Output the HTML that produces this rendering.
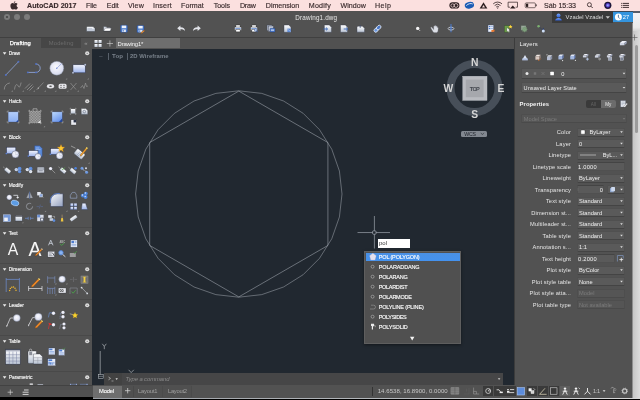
<!DOCTYPE html>
<html lang="en"><head><meta charset="utf-8"><title>AutoCAD 2017 - Drawing1.dwg</title>
<style>
html,body{margin:0;padding:0}
body{width:640px;height:400px;overflow:hidden;position:relative;background:#000;font-family:"Liberation Sans",sans-serif;-webkit-font-smoothing:antialiased}
.t{position:absolute;white-space:nowrap;line-height:1;display:block}
.b{position:absolute;box-sizing:border-box}
svg{position:absolute;left:0;top:0}
</style></head><body>
<div class="b " style="left:0px;top:11px;width:633px;height:385.7px;background:#525252;"></div>
<div class="b " style="left:0px;top:0px;width:640px;height:11px;background:#fbe0df;"></div>
<div class="b " style="left:92px;top:49px;width:423px;height:337px;background:#212830;"></div>
<div class="b " style="left:551.8px;top:11.2px;width:61.2px;height:11.6px;background:#3a3a3a;"></div>
<div class="b " style="left:613px;top:11.2px;width:19.6px;height:11.2px;background:#3494de;border-top:0.8px solid #3a4a5a"></div>
<div class="b " style="left:0px;top:37px;width:633px;height:0.6px;background:#404040;"></div>
<div class="b " style="left:0px;top:37.5px;width:92px;height:11.5px;background:#525252;"></div>
<div class="b " style="left:41px;top:38.1px;width:40.3px;height:10.2px;background:#464646;"></div>
<div class="b " style="left:92px;top:37.5px;width:423px;height:11.5px;background:#515151;"></div>
<div class="b " style="left:116px;top:37.8px;width:64.3px;height:10.7px;background:#6e6e6e;"></div>
<div class="b " style="left:0px;top:49px;width:92px;height:336px;background:#525252;"></div>
<div class="b " style="left:0px;top:385px;width:92.7px;height:11.7px;background:#505050;"></div>
<div class="b " style="left:0px;top:384.8px;width:92.7px;height:0.6px;background:#424242;"></div>
<div class="b " style="left:0px;top:95px;width:92px;height:0.7px;background:#494949;"></div>
<div class="b " style="left:0px;top:131px;width:92px;height:0.7px;background:#494949;"></div>
<div class="b " style="left:0px;top:179px;width:92px;height:0.7px;background:#494949;"></div>
<div class="b " style="left:0px;top:227px;width:92px;height:0.7px;background:#494949;"></div>
<div class="b " style="left:0px;top:263px;width:92px;height:0.7px;background:#494949;"></div>
<div class="b " style="left:0px;top:299px;width:92px;height:0.7px;background:#494949;"></div>
<div class="b " style="left:0px;top:335px;width:92px;height:0.7px;background:#494949;"></div>
<div class="b " style="left:0px;top:371px;width:92px;height:0.7px;background:#494949;"></div>
<div class="b " style="left:108.2px;top:52.5px;width:0.7px;height:7px;background:#59616b;"></div>
<div class="b " style="left:126.7px;top:52.5px;width:0.7px;height:7px;background:#59616b;"></div>
<div class="b " style="left:461px;top:130.7px;width:25.6px;height:6.1px;background:#828890;border-radius:1.5px"></div>
<div class="b " style="left:377.8px;top:239px;width:32.4px;height:8.8px;background:#ffffff;"></div>
<div class="b " style="left:364.2px;top:250.6px;width:96.4px;height:93px;background:#505050;border:0.5px solid #5e5e5e;box-shadow:0 1px 3px rgba(0,0,0,.45)"></div>
<div class="b " style="left:366.2px;top:252.7px;width:93.8px;height:8.4px;background:linear-gradient(#4a90e4,#4492ee);"></div>
<div class="b " style="left:103.7px;top:373px;width:399px;height:12.3px;background:#464647;"></div>
<div class="b " style="left:103.7px;top:373px;width:18px;height:12.3px;background:#424242;"></div>
<div class="b " style="left:92.7px;top:385.3px;width:540.3px;height:12.4px;background:#525252;"></div>
<div class="b " style="left:92.7px;top:397.8px;width:547.3px;height:0.8px;background:linear-gradient(90deg,#9a9ea4,#b8bcc0 60%,#d8d8d8);"></div>
<div class="b " style="left:92.7px;top:385.3px;width:99px;height:12.4px;background:#505050;"></div>
<div class="b " style="left:92.7px;top:385.6px;width:29.3px;height:12.1px;background:#6e6e6e;"></div>
<div class="b " style="left:133px;top:386.3px;width:0.6px;height:11px;background:#494949;"></div>
<div class="b " style="left:162.2px;top:386.3px;width:0.6px;height:11px;background:#4b4b4b;"></div>
<div class="b " style="left:191.4px;top:386.3px;width:0.6px;height:11px;background:#4b4b4b;"></div>
<div class="b " style="left:514px;top:37.6px;width:119px;height:347.6px;background:#525252;"></div>
<div class="b " style="left:514px;top:37.6px;width:0.8px;height:347.6px;background:#3c3c3c;"></div>
<div class="b " style="left:632.7px;top:11px;width:7.3px;height:386.8px;background:linear-gradient(90deg,#c6c6c6,#dcdcdc);"></div>
<div class="b " style="left:632.7px;top:13px;width:7.3px;height:18px;background:linear-gradient(#f2f2f6,#ebebeb 80%,#d4d4d4);"></div>
<div class="b " style="left:632.7px;top:11px;width:7.3px;height:2px;background:#565c6a;"></div>
<div class="b " style="left:632.4px;top:22.5px;width:0.6px;height:375.3px;background:#8e8e8e;"></div>
<div class="b " style="left:634.7px;top:45px;width:3.7px;height:87.5px;background:#9b9b9b;border-radius:1.8px"></div>
<div class="b " style="left:521px;top:68.3px;width:106px;height:10.6px;background:#5a5a5a;border:0.5px solid #505050;border-bottom:0.7px solid #444;border-radius:1.5px"></div>
<div class="b " style="left:521px;top:82.3px;width:106px;height:10.6px;background:#5a5a5a;border:0.5px solid #505050;border-bottom:0.7px solid #444;border-radius:1.5px"></div>
<div class="b " style="left:585.7px;top:100px;width:15px;height:7.8px;background:#3a3a3a;border-radius:2px 0 0 2px"></div>
<div class="b " style="left:600.7px;top:100px;width:15px;height:7.8px;background:#6c6c6c;border-radius:0 2px 2px 0"></div>
<div class="b " style="left:521px;top:113.8px;width:106px;height:9.6px;background:#555555;border:0.5px solid #4e4e4e;border-bottom:0.6px solid #4a4a4a;border-radius:1.5px"></div>
<div class="b " style="left:576.6px;top:127.5px;width:48.8px;height:9px;background:#5a5a5a;border:0.5px solid #505050;border-bottom:0.7px solid #444;border-radius:1.5px"></div>
<div class="b " style="left:576.6px;top:139.0px;width:48.8px;height:9px;background:#5a5a5a;border:0.5px solid #505050;border-bottom:0.7px solid #444;border-radius:1.5px"></div>
<div class="b " style="left:576.6px;top:150.5px;width:48.8px;height:9px;background:#5a5a5a;border:0.5px solid #505050;border-bottom:0.7px solid #444;border-radius:1.5px"></div>
<div class="b " style="left:576.6px;top:162.0px;width:48.8px;height:9px;background:#5a5a5a;border:0.5px solid #505050;border-top:0.8px solid #444;border-radius:1px"></div>
<div class="b " style="left:576.6px;top:173.5px;width:48.8px;height:9px;background:#5a5a5a;border:0.5px solid #505050;border-bottom:0.7px solid #444;border-radius:1.5px"></div>
<div class="b " style="left:576.6px;top:185.0px;width:27.1px;height:9px;background:#5a5a5a;border:0.5px solid #505050;border-top:0.8px solid #444;border-radius:1px"></div>
<div class="b " style="left:606.9px;top:185.0px;width:18.5px;height:9px;background:#5a5a5a;border:0.5px solid #505050;border-bottom:0.7px solid #444;border-radius:1.5px"></div>
<div class="b " style="left:576.6px;top:196.5px;width:48.8px;height:9px;background:#5a5a5a;border:0.5px solid #505050;border-bottom:0.7px solid #444;border-radius:1.5px"></div>
<div class="b " style="left:576.6px;top:208.0px;width:48.8px;height:9px;background:#5a5a5a;border:0.5px solid #505050;border-bottom:0.7px solid #444;border-radius:1.5px"></div>
<div class="b " style="left:576.6px;top:219.5px;width:48.8px;height:9px;background:#5a5a5a;border:0.5px solid #505050;border-bottom:0.7px solid #444;border-radius:1.5px"></div>
<div class="b " style="left:576.6px;top:231.0px;width:48.8px;height:9px;background:#5a5a5a;border:0.5px solid #505050;border-bottom:0.7px solid #444;border-radius:1.5px"></div>
<div class="b " style="left:576.6px;top:242.5px;width:48.8px;height:9px;background:#5a5a5a;border:0.5px solid #505050;border-bottom:0.7px solid #444;border-radius:1.5px"></div>
<div class="b " style="left:576.6px;top:254.0px;width:38.2px;height:9px;background:#5a5a5a;border:0.5px solid #505050;border-top:0.8px solid #444;border-radius:1px"></div>
<div class="b " style="left:576.6px;top:265.5px;width:48.8px;height:9px;background:#5a5a5a;border:0.5px solid #505050;border-bottom:0.7px solid #444;border-radius:1.5px"></div>
<div class="b " style="left:576.6px;top:277.0px;width:48.8px;height:9px;background:#5a5a5a;border:0.5px solid #505050;border-bottom:0.7px solid #444;border-radius:1.5px"></div>
<div class="b " style="left:576.6px;top:288.5px;width:48.8px;height:9px;background:#555555;border:0.5px solid #4e4e4e;border-bottom:0.6px solid #4a4a4a;border-radius:1.5px"></div>
<div class="b " style="left:576.6px;top:300.0px;width:48.8px;height:9px;background:#555555;border:0.5px solid #4e4e4e;border-bottom:0.6px solid #4a4a4a;border-radius:1.5px"></div>
<div class="b " style="left:371.6px;top:386.5px;width:0.6px;height:9px;background:#333;"></div>
<div class="b " style="left:483.0px;top:386.2px;width:10.4px;height:9.6px;background:#3a3a3a;"></div>
<div class="b " style="left:494.3px;top:386.2px;width:10.4px;height:9.6px;background:#3a3a3a;"></div>
<div class="b " style="left:505.2px;top:386.2px;width:10.4px;height:9.6px;background:#3a3a3a;"></div>
<div class="b " style="left:526.8px;top:386.2px;width:10.4px;height:9.6px;background:#3a3a3a;"></div>
<div class="b " style="left:537.8px;top:386.2px;width:10.4px;height:9.6px;background:#3a3a3a;"></div>
<div class="b " style="left:548.5999999999999px;top:386.2px;width:10.4px;height:9.6px;background:#3a3a3a;"></div>
<div class="b " style="left:559.8px;top:386.2px;width:10.4px;height:9.6px;background:#5e5e5e;"></div>
<svg width="640" height="400" viewBox="0 0 640 400">
<defs>
<linearGradient id="gb" x1="0" y1="0" x2="0" y2="1"><stop offset="0" stop-color="#e8f0fb"/><stop offset="1" stop-color="#5b8ed8"/></linearGradient>
<linearGradient id="gw" x1="0" y1="0" x2="0" y2="1"><stop offset="0" stop-color="#ffffff"/><stop offset="1" stop-color="#b9c3d3"/></linearGradient>
<radialGradient id="gs" cx="0.45" cy="0.4" r="0.7"><stop offset="0" stop-color="#fbfbff"/><stop offset=".7" stop-color="#dcdff0"/><stop offset="1" stop-color="#b8bed2"/></radialGradient>
<linearGradient id="gb2" x1="0" y1="0" x2="0" y2="1"><stop offset="0" stop-color="#f2f4fc"/><stop offset="1" stop-color="#9cb2ea"/></linearGradient>
<linearGradient id="gb3" x1="0" y1="0" x2=".6" y2="1"><stop offset="0" stop-color="#bedafc"/><stop offset="1" stop-color="#6a94ea"/></linearGradient>
<linearGradient id="gb3a" x1="0" y1="0" x2="0" y2="1"><stop offset="0" stop-color="#b4cefa"/><stop offset="1" stop-color="#8aaef2"/></linearGradient>
<pattern id="dots" width="1.6" height="1.6" patternUnits="userSpaceOnUse"><rect width="1.6" height="1.6" fill="#707070"/><rect width=".8" height=".8" fill="#b0b0b0"/><rect x=".8" y=".8" width=".8" height=".8" fill="#b0b0b0"/></pattern>
<linearGradient id="gfil" x1="0" y1="0" x2=".8" y2="1"><stop offset="0" stop-color="#f8f9fc"/><stop offset="1" stop-color="#9ca8c4"/></linearGradient>
<linearGradient id="gav" x1="0" y1="0" x2="0" y2="1"><stop offset="0" stop-color="#7aa6f8"/><stop offset="1" stop-color="#2c5cd4"/></linearGradient>
<radialGradient id="siri" cx="0.5" cy="0.5" r="0.5"><stop offset="0" stop-color="#9fd0ff"/><stop offset="0.6" stop-color="#5b3fd0"/><stop offset="1" stop-color="#1a1440"/></radialGradient>
</defs>
<g fill="#3b2c2e"><path d="M13.900 3.500c.6 0 1.100-.5 1.900-.5c.7 0 1.400.4 1.800 1c-1.500.9-1.300 2.900.3 3.500c-.4 1-1.100 2.100-1.900 2.100c-.7 0-.9-.4-1.700-.4c-.8 0-1.100.4-1.700.4c-.9 0-2.200-1.900-2.200-3.700c0-1.800 1.100-2.800 2.200-2.800c.7 0 1.100.4 1.300.4z"/><path d="M13.800 3.100c-.1-.9.700-1.700 1.500-1.800c.1.900-.7 1.700-1.500 1.800z"/></g>
<circle cx="7" cy="17" r="3" fill="#7b7b7b"/>
<circle cx="17" cy="17" r="3" fill="#7b7b7b"/>
<circle cx="27" cy="17" r="3" fill="#7b7b7b"/>
<circle cx="7" cy="17" r="1.1" fill="#444"/>
<path d="M605.600 16.200h4.400l-2.200 2.600z" fill="#c4c4c4"/>
<circle cx="618.400" cy="17" r="3.500" fill="#fff"/><path d="M618.400 14.800v2.400l1.400 1.400" stroke="#2a5a8c" stroke-width=".8" fill="none"/>
<circle cx="558.500" cy="15.600" r="2" fill="url(#gav)"/><path d="M555.200 20.600c0-3.600 6.600-3.600 6.600 0z" fill="url(#gav)"/>
<rect x="94.5" y="39.9" width="3.100" height="3.100" rx=".5" fill="url(#gw)"/>
<rect x="94.5" y="43.9" width="3.100" height="3.100" rx=".5" fill="url(#gw)"/>
<rect x="98.5" y="39.9" width="3.100" height="3.100" rx=".5" fill="url(#gw)"/>
<rect x="98.5" y="43.9" width="3.100" height="3.100" rx=".5" fill="url(#gw)"/>
<path d="M106.800 43.500h6.200M109.900 40.400v6.200" stroke="#cccccc" stroke-width=".65"/>
<path d="M2.800 52.25 h3.600 l-1.800 2.400z" fill="#ececec"/>
<circle cx="87.200" cy="53.25" r="2.100" fill="#dcdcdc"/><circle cx="87.200" cy="53.25" r=".6" fill="#666"/>
<path d="M2.800 100.25 h3.600 l-1.800 2.400z" fill="#ececec"/>
<circle cx="87.200" cy="101.25" r="2.100" fill="#dcdcdc"/><circle cx="87.200" cy="101.25" r=".6" fill="#666"/>
<path d="M2.800 136.25 h3.600 l-1.800 2.400z" fill="#ececec"/>
<circle cx="87.200" cy="137.25" r="2.100" fill="#dcdcdc"/><circle cx="87.200" cy="137.25" r=".6" fill="#666"/>
<path d="M2.800 184.25 h3.600 l-1.800 2.400z" fill="#ececec"/>
<circle cx="87.200" cy="185.25" r="2.100" fill="#dcdcdc"/><circle cx="87.200" cy="185.25" r=".6" fill="#666"/>
<path d="M2.800 232.25 h3.600 l-1.800 2.400z" fill="#ececec"/>
<circle cx="87.200" cy="233.25" r="2.100" fill="#dcdcdc"/><circle cx="87.200" cy="233.25" r=".6" fill="#666"/>
<path d="M2.800 268.25 h3.600 l-1.800 2.400z" fill="#ececec"/>
<circle cx="87.200" cy="269.25" r="2.100" fill="#dcdcdc"/><circle cx="87.200" cy="269.25" r=".6" fill="#666"/>
<path d="M2.800 304.25 h3.600 l-1.800 2.400z" fill="#ececec"/>
<circle cx="87.200" cy="305.25" r="2.100" fill="#dcdcdc"/><circle cx="87.200" cy="305.25" r=".6" fill="#666"/>
<path d="M2.800 340.25 h3.600 l-1.800 2.400z" fill="#ececec"/>
<circle cx="87.200" cy="341.25" r="2.100" fill="#dcdcdc"/><circle cx="87.200" cy="341.25" r=".6" fill="#666"/>
<path d="M2.800 376.25 h3.600 l-1.800 2.400z" fill="#ececec"/>
<circle cx="87.200" cy="377.25" r="2.100" fill="#dcdcdc"/><circle cx="87.200" cy="377.25" r=".6" fill="#666"/>
<path d="M7.600 392.200h5.400M10.300 389.500v5.400" stroke="#e4e4e4" stroke-width=".6"/>
<path d="M24 390h4.600M22.600 392.200h6M22.600 394.400h6" stroke="#e4e4e4" stroke-width=".9"/>
<polygon points="238.80,91.10 327.91,142.55 327.91,245.45 238.80,296.90 149.69,245.45 149.69,142.55" fill="none" stroke="#b2b8c0" stroke-width=".5"/>
<polygon points="238.80,90.80 261.76,93.39 283.58,101.02 303.14,113.31 319.49,129.66 331.78,149.22 339.41,171.04 342.00,194.00 339.41,216.96 331.78,238.78 319.49,258.34 303.14,274.69 283.58,286.98 261.76,294.61 238.80,297.20 215.84,294.61 194.02,286.98 174.46,274.69 158.11,258.34 145.82,238.78 138.19,216.96 135.60,194.00 138.19,171.04 145.82,149.22 158.11,129.66 174.46,113.31 194.02,101.02 215.84,93.39" fill="none" stroke="#a8aeb6" stroke-width=".5"/>
<path d="M100.200 351v23.500" stroke="#c8ccd0" stroke-width=".6"/><rect x="98.400" y="374.500" width="4.800" height="3.800" fill="none" stroke="#c8ccd0" stroke-width=".5"/><path d="M98.400 376.400h4.800" stroke="#c8ccd0" stroke-width=".4"/>
<path d="M102.300 343.800l2 2.600l2-2.600M104.300 346.400v2.800" stroke="#c8ccd0" stroke-width=".6" fill="none"/>
<path d="M128.600 369.800l2.600 2.800l2.600-2.800" stroke="#c8ccd0" stroke-width=".6" fill="none"/>
<circle cx="474.500" cy="88" r="24" fill="none" stroke="#474f59" stroke-width="8"/>
<rect x="462.800" y="76.200" width="24.200" height="24.200" fill="#b9bbc0" stroke="#c4c6ca" stroke-width=".4"/><rect x="465.800" y="79.600" width="17.800" height="17.600" fill="#a6a8ad"/>
<path d="M480.800 132.800l1.600 1.900l1.600-1.900" stroke="#2c3138" stroke-width=".6" fill="none"/>
<path d="M357.500 232.550h32.500M374.400 216v32.500" stroke="#b4bac2" stroke-width=".6"/><rect x="372.600" y="230.850" width="3.400" height="3.400" rx=".8" fill="#212830" stroke="#a8aeb8" stroke-width=".7"/>
<circle cx="372.600" cy="266.7" r="1.450" fill="#444" stroke="#b4b4b4" stroke-width=".7"/>
<circle cx="372.600" cy="276.7" r="1.450" fill="#444" stroke="#b4b4b4" stroke-width=".7"/>
<circle cx="372.600" cy="286.7" r="1.450" fill="#444" stroke="#b4b4b4" stroke-width=".7"/>
<circle cx="372.600" cy="296.7" r="1.450" fill="#444" stroke="#b4b4b4" stroke-width=".7"/>
<circle cx="372.600" cy="316.7" r="1.450" fill="#444" stroke="#b4b4b4" stroke-width=".7"/>
<path d="M372.900 253.200l3.300 2.500l-1.200 4.300h-4.200l-1.200-4.300z" fill="#e4e0ee" stroke="#b8b4cc" stroke-width=".3"/>
<path d="M371 305.200h2.600a1.900 1.900 0 0 1 0 3.800h-3.600" fill="none" stroke="#9a9a9a" stroke-width=".6"/>
<path d="M371 323.800h3v2.400h-1v3.400h-1.200v-3.600h-.8z" fill="#ececec"/><path d="M374 325l1.200.6v1.600" stroke="#ddd" stroke-width=".5" fill="none"/>
<path d="M410 336.700h4.400l-2.200 3.900z" fill="#f4f4f4"/>
<path d="M108.500 377l2 1.400l-2 1.400" stroke="#ddd" stroke-width=".6" fill="none"/><path d="M111.500 381h2" stroke="#ddd" stroke-width=".5"/><path d="M115.500 378.300h2.400l-1.200 1.600z" fill="#ddd"/>
<path d="M497.800 378.300h2.600l-1.300 1.700z" fill="#ccc"/>
<path d="M125 390.700h5.400M127.700 388v5.400" stroke="#e0e0e0" stroke-width=".7"/>
<path d="M631.5 37.5h6M634.5 34.5v6" stroke="#555" stroke-width=".6"/>
<circle cx="527" cy="73.500" r="1.500" fill="#e8e8e8"/><rect x="533.800" y="72.200" width="2.400" height="2.600" fill="#777"/><path d="M541.500 72l3 3M544.500 72l-3 3" stroke="#777" stroke-width=".7"/><rect x="550.300" y="71.700" width="3.600" height="3.600" rx=".6" fill="#fff"/>
<path d="M622.7 72.7 h2.600l-1.300 1.700z" fill="#e0e0e0"/>
<path d="M622.7 86.9 h2.600l-1.300 1.700z" fill="#e0e0e0"/>
<path d="M622.700 118h2.600l-1.300 1.700z" fill="#777"/>
<path d="M620.2 131.2 h2.600l-1.300 1.700z" fill="#e0e0e0"/>
<rect x="580.800" y="130.0" width="4.200" height="4.200" rx=".8" fill="#fff" stroke="#2a2a2a" stroke-width=".4"/>
<path d="M620.2 142.7 h2.600l-1.300 1.700z" fill="#e0e0e0"/>
<path d="M620.2 154.2 h2.600l-1.300 1.700z" fill="#e0e0e0"/>
<path d="M580 155.0 h16" stroke="#ddd" stroke-width=".6"/>
<path d="M620.2 177.2 h2.600l-1.300 1.700z" fill="#e0e0e0"/>
<path d="M578 188.0 v3" stroke="#888" stroke-width=".5" stroke-dasharray=".5 .5"/>
<rect x="610" y="188.0" width="3.800" height="4.200" rx=".5" fill="#8ca4cc"/><rect x="611.200" y="187.0" width="3.800" height="4.200" rx=".5" fill="#cdd9ee"/>
<path d="M620.2 188.7 h2.600l-1.300 1.700z" fill="#e0e0e0"/>
<path d="M620.2 200.2 h2.600l-1.300 1.700z" fill="#e0e0e0"/>
<path d="M620.2 211.7 h2.600l-1.300 1.700z" fill="#e0e0e0"/>
<path d="M620.2 223.2 h2.600l-1.300 1.700z" fill="#e0e0e0"/>
<path d="M620.2 234.7 h2.600l-1.300 1.700z" fill="#e0e0e0"/>
<path d="M620.2 246.2 h2.600l-1.300 1.700z" fill="#e0e0e0"/>
<path d="M617.400 261.5 v-6h5.800v3" fill="none" stroke="#7688a8" stroke-width=".9"/><path d="M619.400 259.6 h3.800M621.300 257.7 v3.800" stroke="#f4f4f4" stroke-width=".8"/>
<path d="M620.2 269.2 h2.600l-1.300 1.700z" fill="#e0e0e0"/>
<path d="M620.2 280.7 h2.600l-1.300 1.700z" fill="#e0e0e0"/>
<g transform="translate(86.5 26.5)"><path d="M0 1.200q0-1.200 1.200-1.200h5.300l2 2v2.400q0 .6-.6.600h-7.300q-.6 0-.6-.6z" fill="url(#gw)" stroke="#30343c" stroke-width=".4"/><path d="M1 2h4.500M1 3.300h6.500" stroke="#a4acc0" stroke-width=".5"/></g>
<g transform="translate(103.5 26)"><path d="M0 .6h2.600l.7.800h3.600v3.600h-6.900z" fill="#d8dce6" stroke="#30343c" stroke-width=".4"/><path d="M.3 5l1.400-2.800h6.200l-1.300 2.800z" fill="#ffffff" stroke="#30343c" stroke-width=".3"/></g>
<g transform="translate(120.5 25.2)"><rect x="0" y="0" width="7" height="7" rx=".8" fill="#4878c8" stroke="#2a4a8c" stroke-width=".4"/><rect x="1.300" y=".4" width="4.400" height="2.600" fill="#eef2fa"/><rect x="1.600" y="4.300" width="3.800" height="2.500" fill="#dfe6f4"/><rect x="2.200" y="4.800" width="1" height="1.600" fill="#4878c8"/></g>
<g transform="translate(137 25.5)"><rect x="0" y="0" width="7" height="7" rx=".8" fill="#4878c8" stroke="#2a4a8c" stroke-width=".4"/><rect x="1.300" y=".4" width="4.400" height="2.600" fill="#eef2fa"/><rect x="1.600" y="4.300" width="3.800" height="2.500" fill="#dfe6f4"/><rect x="2.200" y="4.800" width="1" height="1.600" fill="#4878c8"/></g>
<g transform="translate(137 25.5)"><path d="M4.200 6.800l2.800-2.200l.8 1l-2.800 2.200l-1.200.3z" fill="#f09030" stroke="#5a3a10" stroke-width=".3"/></g>
<path d="M177.200 28.300l3.200-2.700v1.700c3.200 0 4.600 1.300 4.600 3.900c-.8-1.500-2-2-4.600-2v1.800z" fill="#e2e4ea"/>
<path d="M200.800 28.300l-3.200-2.700v1.700c-3.200 0-4.600 1.300-4.600 3.900c.8-1.500 2-2 4.600-2v1.800z" fill="#e2e4ea"/>
<g transform="translate(234.5 25)"><rect x="1.400" y="0" width="4.200" height="2.400" fill="#fff" stroke="#222" stroke-width=".4"/><rect x="0" y="2" width="7" height="3.400" rx=".7" fill="#e4e8f0" stroke="#222" stroke-width=".4"/><rect x=".8" y="3" width="5.400" height="1" fill="#7f9fd8"/><rect x="1.400" y="4.600" width="4.200" height="2.300" fill="#fff" stroke="#222" stroke-width=".4"/></g>
<g transform="translate(250.5 25)"><rect x="1.400" y="0" width="4.200" height="2.400" fill="#fff" stroke="#222" stroke-width=".4"/><rect x="0" y="2" width="7" height="3.400" rx=".7" fill="#e4e8f0" stroke="#222" stroke-width=".4"/><rect x=".8" y="3" width="5.400" height="1" fill="#7f9fd8"/><rect x="1.400" y="4.600" width="4.200" height="2.300" fill="#fff" stroke="#222" stroke-width=".4"/></g>
<g transform="translate(250.5 25)"><circle cx="5.300" cy="5" r="1.400" fill="#bcd0f0" stroke="#3a5a9c" stroke-width=".5"/><path d="M6.300 6l1.200 1.200" stroke="#3a5a9c" stroke-width=".7"/></g>
<g transform="translate(267 25)"><rect x="0" y="0" width="5" height="5.600" fill="#aab2c4" stroke="#3a4050" stroke-width=".4"/><rect x="1.400" y="1" width="5" height="5.600" fill="#c4cad8" stroke="#3a4050" stroke-width=".4"/><rect x="3" y="3.300" width="5" height="3.700" rx=".6" fill="#4c7cd0" stroke="#223a70" stroke-width=".4"/><rect x="3.900" y="4.600" width="3.200" height="1" fill="#e8eefa"/></g>
<g transform="translate(284 25)"><path d="M0 0h4.800l2.200 2.200v5.100h-7z" fill="url(#gw)" stroke="#3a4050" stroke-width=".4"/><rect x="3.400" y="3.600" width="3.400" height="3.500" fill="#5a88d4"/><path d="M4 4.300l2 2" stroke="#dfe8f8" stroke-width=".6"/></g>
<g transform="translate(324.4 25)"><path d="M0 0h4.800l2.200 2.200v5.100h-7z" fill="url(#gw)" stroke="#3a4050" stroke-width=".4"/><path d="M-1 4h3.800M1.600 2.600l1.600 1.400l-1.600 1.400" stroke="#3a68b8" stroke-width=".9" fill="none"/></g>
<g transform="translate(340.5 25)"><path d="M0 0h4.800l2.200 2.200v5.100h-7z" fill="url(#gw)" stroke="#3a4050" stroke-width=".4"/><path d="M3.200 4h3.800M5.600 2.600l1.600 1.400l-1.600 1.400" stroke="#3a68b8" stroke-width=".9" fill="none"/></g>
<g transform="translate(357 26.2)"><path d="M0 1.200q0-1.200 1.200-1.200h4.300l2 2v4h-7.500z" fill="url(#gw)" stroke="#3a4050" stroke-width=".4"/><path d="M3.200 -1.200v3" stroke="#3a4a70" stroke-width=".7"/></g>
<g transform="translate(377.5 28.7)"><g transform="rotate(-45)"><rect x="-4.200" y="-1.700" width="5" height="3.400" rx="1.700" fill="#6a98e0" stroke="#e8eefa" stroke-width=".8"/><rect x="-.8" y="-1.700" width="5" height="3.400" rx="1.700" fill="#4a78c8" stroke="#e8eefa" stroke-width=".8"/></g></g>
<circle cx="417.700" cy="28.400" r="1.700" fill="#f4f4f6"/><path d="M418.900 29.700l1.300 1.300" stroke="#d0d0d4" stroke-width=".8"/>
<path d="M432.600 28.200l-.9-.9c-.6-.5-1.200.2-.8.800l2 3.500c.5.800 1 1 2 1h1.300c1 0 1.600-.6 1.700-1.500l.3-3.200c0-.7-.9-.8-1 0v-1.300c0-.8-1-.8-1.100 0v-.6c0-.8-1.100-.8-1.100 0v.4c0-.8-1.200-.8-1.200 0v3.400z" fill="#dcdfe6" stroke="#8c909c" stroke-width=".3"/>
<path d="M451 24v8.200" stroke="#4a78c8" stroke-width="1.100"/><ellipse cx="451" cy="28.600" rx="2.900" ry="1.400" fill="none" stroke="#dfe6f6" stroke-width=".7"/><path d="M451 26.800v3" stroke="#4a78c8" stroke-width="1.100"/>
<g transform="translate(488 25)"><rect x="0" y="0" width="5.600" height="7" fill="#eef2fa" stroke="#3a4a70" stroke-width=".4"/><rect x=".8" y="1" width="1.600" height="1.200" fill="#4a78c8"/><rect x=".8" y="3" width="1.600" height="1.200" fill="#4a78c8"/><path d="M3 1.600h2M3 3.600h2" stroke="#4a78c8" stroke-width=".5"/><path d="M3 5.600l3.200-1l.6 1.600l-3 1z" fill="#e8752a"/></g>
<g transform="translate(504.5 25.3)"><rect x="0" y=".5" width="4.600" height="6.300" fill="#6a9c48" stroke="#3a5a28" stroke-width=".4"/><path d="M2.400 2.200v4.400l1.100-1l.9 1.600l.8-.4l-.9-1.600h1.400z" fill="#fff" stroke="#333" stroke-width=".25"/><path d="M6 -.6l.6 1.300l1.400.2l-1 .9l.3 1.400l-1.300-.7l-1.200.7l.2-1.400l-1-.9l1.400-.2z" fill="#ffd83a"/></g>
<g transform="translate(521 25.6)"><rect x="0" y="0" width="5" height="4.600" fill="#9aa89c" stroke="#566458" stroke-width=".4"/><circle cx="3.600" cy="3.800" r="2.400" fill="#7a9c78"/><circle cx="3.600" cy="3.800" r="1" fill="#a8c0a6"/><path d="M3.600 .9v5.800M.7 3.800h5.800M1.600 1.800l4 4M5.600 1.800l-4 4" stroke="#7a9c78" stroke-width=".7"/></g>
<circle cx="538.600" cy="26.300" r="1.300" fill="#7cb070"/><path d="M539.500 27l3.600 3.600" stroke="#2a3a60" stroke-width=".6"/><path d="M543.300 27.500l-1.500 3.500h3z" fill="#2a3a68"/><circle cx="543.300" cy="31" r="1.500" fill="#cfe0f8"/>
<path d="M5.800 75l12.600-13.200" stroke="#8fa4d6" stroke-width=".8"/><circle cx="5.800" cy="75" r="1" fill="#4f6fc4"/><circle cx="18.400" cy="61.800" r="1" fill="#4f6fc4"/>
<path d="M27.500 72.400h8.500a4.200 4.200 0 0 0 0-8.400" fill="none" stroke="#8fa4d6" stroke-width=".9"/><circle cx="27.800" cy="72.400" r=".9" fill="#4f6fc4"/><circle cx="36" cy="72.400" r=".9" fill="#4f6fc4"/><circle cx="36" cy="64" r=".9" fill="#4f6fc4"/>
<circle cx="56.800" cy="68.300" r="7" fill="url(#gs)" stroke="#70788c" stroke-width=".4"/><path d="M56.800 68.300l4.600-4.600" stroke="#7c90d8" stroke-width=".6"/><circle cx="56.800" cy="68.300" r=".7" fill="#6c84d4"/>
<rect x="73" y="64.800" width="12.200" height="8" fill="url(#gb2)" stroke="#2c3450" stroke-width=".45"/><circle cx="73" cy="72.800" r="1" fill="#d8e0f0" stroke="#2c3450" stroke-width=".3"/><circle cx="85.200" cy="64.800" r="1" fill="#d8e0f0" stroke="#2c3450" stroke-width=".3"/>
<path d="M65.60000000000001 79.6 l1.600 0 l0 -1.600z" fill="#8a8a8a"/>
<path d="M87.2 79.6 l1.600 0 l0 -1.600z" fill="#8a8a8a"/>
<path d="M4.300 89.500c0-3.500 2-6 5.500-6.500" fill="none" stroke="#9c9c9c" stroke-width=".7"/>
<path d="M14.500 89.500c1-7 3-5 4-3s2-1 2.600-4" fill="none" stroke="#9c9c9c" stroke-width=".7"/>
<path d="M25 88.500l5-5M27 90l5.500-5.500M29.500 90.500l4-4" fill="none" stroke="#9c9c9c" stroke-width=".7"/>
<path d="M36.500 90l7-7.500" fill="none" stroke="#9c9c9c" stroke-width=".6"/><circle cx="38.300" cy="88.100" r=".7" fill="#ccc"/>
<ellipse cx="50.500" cy="86.200" rx="3.600" ry="2.200" fill="#e4e4e8"/><ellipse cx="50.500" cy="86.200" rx="1.400" ry=".8" fill="#555"/>
<rect x="58.600" y="83.800" width="8" height="5" rx="1.600" fill="#e6e6ea"/><circle cx="61" cy="85.300" r=".6" fill="#444"/><circle cx="64" cy="85.300" r=".6" fill="#444"/><circle cx="61" cy="87.300" r=".6" fill="#444"/><circle cx="64" cy="87.300" r=".6" fill="#444"/>
<path d="M70.500 83l5.500 6.500M76.500 83l-6 7" fill="none" stroke="#9c9c9c" stroke-width=".6"/>
<path d="M80.500 88l2-2.500l1.500 3l1.500-5.500l1 3.500l1.500-.5" fill="none" stroke="#9c9c9c" stroke-width=".6"/>
<path d="M11.2 91.8 l1.600 0 l0 -1.600z" fill="#8a8a8a"/>
<path d="M22.2 91.8 l1.600 0 l0 -1.600z" fill="#8a8a8a"/>
<path d="M33.2 91.8 l1.600 0 l0 -1.600z" fill="#8a8a8a"/>
<path d="M44.2 91.8 l1.600 0 l0 -1.600z" fill="#8a8a8a"/>
<path d="M54.7 91.8 l1.600 0 l0 -1.600z" fill="#8a8a8a"/>
<path d="M66.7 91.8 l1.600 0 l0 -1.600z" fill="#8a8a8a"/>
<path d="M77.2 91.8 l1.600 0 l0 -1.600z" fill="#8a8a8a"/>
<rect x="8.1" y="111.9" width="10.1" height="10.099999999999994" fill="url(#gb3a)" stroke="#3a4a78" stroke-width=".3"/>
<path d="M18.2 122 l-2.2 0 l2.2 -2.2z" fill="#24469a"/>
<path d="M8.1 111.9h-1.5M8.1 111.9v-1.5M18.2 111.9h1.5M18.2 111.9v-1.5M8.1 122h-1.5M8.1 122v1.5M18.2 122h1.5M18.2 122v1.5" stroke="#c8c8c8" stroke-width=".5" fill="none"/>
<rect x="52" y="111.9" width="10.200000000000003" height="10.099999999999994" fill="url(#gb3)" stroke="#3a4a78" stroke-width=".3"/>
<path d="M62.2 122 l-3.4 0 l3.4 -3.4z" fill="#24469a"/>
<path d="M52 111.9h-1.5M52 111.9v-1.5M62.2 111.9h1.5M62.2 111.9v-1.5M52 122h-1.5M52 122v1.5M62.2 122h1.5M62.2 122v1.5" stroke="#c8c8c8" stroke-width=".5" fill="none"/>
<rect x="29.400" y="111" width="11.200" height="12" fill="url(#dots)" stroke="#b8b8b8" stroke-width=".5" stroke-dasharray="1 .8"/>
<path d="M33 111v-2.200h4v2.200" fill="none" stroke="#c8c8c8" stroke-width=".6"/><path d="M40.600 123l-3 0l3-3z" fill="#e0e0e0"/>
<path d="M29.4 111h-1.2M29.4 111v-1.2M40.6 111h1.2M40.6 111v-1.2M29.4 123h-1.2M29.4 123v1.2M40.6 123h1.2M40.6 123v1.2" stroke="#c8c8c8" stroke-width=".5" fill="none"/>
<path d="M43.5 127.3 l1.600 0 l0 -1.600z" fill="#8a8a8a"/>
<rect x="70.600" y="108.800" width="5" height="5" fill="url(#gw)" stroke="#333" stroke-width=".3"/>
<path d="M70.6 108.8h-1M70.6 108.8v-1M75.6 108.8h1M75.6 108.8v-1M70.6 113.8h-1M70.6 113.8v1M75.6 113.8h1M75.6 113.8v1" stroke="#bbb" stroke-width=".5" fill="none"/>
<path d="M81.200 108.600h4.600l2 1.800v4h-6.600z" fill="url(#gw)" stroke="#30343c" stroke-width=".4"/><circle cx="84.300" cy="111.600" r="1.300" fill="none" stroke="#70788c" stroke-width=".7"/>
<rect x="71" y="119.800" width="5.200" height="5.200" fill="#e8eaf0" stroke="#333" stroke-width=".3"/><path d="M73.600 119.800h2.600v2.600h-2.600z" fill="#2c3448"/>
<rect x="6.6" y="147.2" width="9.200000000000001" height="6.600000000000023" fill="url(#gb2)" stroke="#2c3450" stroke-width=".5"/>
<circle cx="6.3" cy="153.60000000000002" r=".8" fill="#5a82d8"/>
<circle cx="15.4" cy="154.4" r="3.6" fill="url(#gs)" stroke="#3a4050" stroke-width=".4"/>
<path d="M15.4 151.52v2.8800000000000003h2.8800000000000003" stroke="#9aa2b4" stroke-width=".3" fill="none"/>
<path d="M34.600 145.800h5l2.600 2.600v8h-7.600z" fill="#5c8cdc" stroke="#2a4688" stroke-width=".4"/><path d="M36 148h3M36 149.600h4.600" stroke="#bcd0f4" stroke-width=".5"/>
<rect x="28.6" y="150.6" width="9.399999999999999" height="5.700000000000017" fill="url(#gb2)" stroke="#2c3450" stroke-width=".5"/>
<circle cx="28.3" cy="156.10000000000002" r=".8" fill="#5a82d8"/>
<circle cx="38" cy="156.6" r="3.1" fill="url(#gs)" stroke="#3a4050" stroke-width=".4"/>
<path d="M38 154.12v2.4800000000000004h2.4800000000000004" stroke="#9aa2b4" stroke-width=".3" fill="none"/>
<rect x="50.6" y="148.6" width="9.399999999999999" height="5.900000000000006" fill="url(#gb2)" stroke="#2c3450" stroke-width=".5"/>
<circle cx="50.300000000000004" cy="154.3" r=".8" fill="#5a82d8"/>
<circle cx="59.6" cy="155.7" r="3.4" fill="url(#gs)" stroke="#3a4050" stroke-width=".4"/>
<path d="M59.6 152.98v2.72h2.72" stroke="#9aa2b4" stroke-width=".3" fill="none"/>
<path d="M61 144.600l1 2.400l2.600.2l-2 1.700l.7 2.600l-2.300-1.400l-2.300 1.400l.7-2.600l-2-1.700l2.600-.2z" fill="#ffc830" stroke="#e08a10" stroke-width=".3"/>
<path d="M71 146l4.500 2.200" stroke="#ddd" stroke-width=".5"/><g transform="translate(79.500 154) rotate(40)"><rect x="-5" y="-3.200" width="10" height="6.400" rx="1" fill="url(#gw)" stroke="#3a4050" stroke-width=".4"/><path d="M-2 -1.400h5M-2 .2h5M-2 1.800h3" stroke="#8090b8" stroke-width=".5"/></g><path d="M80.500 154.600l5.200-6.400l1.300 1l-5.200 6.400l-1.700.6z" fill="#f0a030" stroke="#6a4010" stroke-width=".3"/><path d="M85.700 148.200l.9-1.100l1.300 1l-.9 1.100z" fill="#ffe060"/>
<path d="M88.0 163.8 l1.600 0 l0 -1.600z" fill="#8a8a8a"/>
<g transform="translate(7.6 170.6) rotate(40)"><path d="M-6 0h2.500" stroke="#ccc" stroke-width=".4"/><rect x="-3.200" y="-1.800" width="6.400" height="3.600" rx=".7" fill="url(#gw)" stroke="#3a4050" stroke-width=".3"/></g>
<circle cx="16.3" cy="169.6" r="1.700" fill="#c8d4ea"/><circle cx="19.6" cy="168.7" r="1.900" fill="#5c8cdc"/><circle cx="19.6" cy="171.6" r="1.700" fill="#5c8cdc"/>
<path d="M16.3 169.6L19.6 168.7M16.3 169.6L19.6 171.6" stroke="#a8b8d8" stroke-width=".5"/>
<circle cx="27.3" cy="169.6" r="1.700" fill="#e4e8f0"/><circle cx="30.6" cy="168.7" r="1.900" fill="#5c8cdc"/><circle cx="30.6" cy="171.6" r="1.700" fill="#e4e8f0"/>
<path d="M27.3 169.6L30.6 168.7M27.3 169.6L30.6 171.6" stroke="#a8b8d8" stroke-width=".5"/>
<rect x="37.200" y="167.200" width="7" height="5.600" rx=".6" fill="#d8dce6" stroke="#3a4050" stroke-width=".3"/><path d="M37.200 169h7M38.600 170.800h4.200" stroke="#4a5060" stroke-width=".6"/>
<path d="M51 169l4.200 4.200" stroke="#c8c8c8" stroke-width=".5"/><circle cx="50.600" cy="168.600" r="1.700" fill="url(#gs)"/>
<g transform="translate(63 170.6) rotate(40)"><path d="M-6 0h2.500" stroke="#ccc" stroke-width=".4"/><rect x="-3.200" y="-1.800" width="6.400" height="3.600" rx=".7" fill="url(#gw)" stroke="#3a4050" stroke-width=".3"/></g><path d="M61.600 168.600l1.200 1.200l2-2.400" stroke="#58a848" stroke-width=".7" fill="none"/>
<g transform="translate(73 171) rotate(40)"><path d="M-6 0h2.500" stroke="#ccc" stroke-width=".4"/><rect x="-3.200" y="-1.800" width="6.400" height="3.600" rx=".7" fill="url(#gw)" stroke="#3a4050" stroke-width=".3"/></g><circle cx="75.600" cy="168.300" r="1.300" fill="#4c80dc"/>
<circle cx="82" cy="168.300" r="1.500" fill="#6c98e0"/><circle cx="86.600" cy="172.300" r="1.500" fill="#6c98e0"/><path d="M82.600 169l1.200 1.200M86 171.600l-1.200-1.200" stroke="#d8e0f0" stroke-width=".8"/><circle cx="86" cy="168.300" r="1" fill="#d8dce8"/>
<circle cx="9.300" cy="197.300" r="2.600" fill="url(#gs)" stroke="#3a4050" stroke-width=".3"/>
<path d="M13.400 195.300h4.300v2" stroke="#e4e6ec" stroke-width=".8" fill="none"/><path d="M16.200 197l1.500 1.800l1.500-1.800z" fill="#e4e6ec"/>
<ellipse cx="15" cy="203" rx="4" ry="2.700" fill="#5c9ce4" stroke="#bcd8f8" stroke-width=".6" transform="rotate(15 15 203)"/>
<path d="M29.100 192.400l-2.600 5.600h2.600zM30.100 192.400l2.600 5.600h-2.600z" fill="#a8acb4" stroke="#70747c" stroke-width=".3"/><path d="M29.600 191.600v7.200" stroke="#5c84d8" stroke-width=".5"/>
<rect x="37.200" y="192" width="3.600" height="3.400" fill="#e4e8f0"/><rect x="39.600" y="194" width="3" height="3" fill="#8ca8dc" stroke="#e4e8f0" stroke-width=".4"/><path d="M41.600 196l1.600 1.600" stroke="#c8c8c8" stroke-width=".5"/>
<circle cx="29.500" cy="206.400" r="3.100" fill="none" stroke="#a4a8b0" stroke-width=".7" stroke-dasharray="16 3"/>
<path d="M36.600 206.600h2.400M40.600 206.600h2.400M40.400 204.600l-1.200 4" stroke="#5a6c98" stroke-width=".6" fill="none"/>
<path d="M50.600 206.600v-6a6.800 6.800 0 0 1 6.800-6.800h5.600v12.800z" fill="url(#gfil)" stroke="#2c3450" stroke-width=".5"/><path d="M50.300 203v-2.400a7.100 7.100 0 0 1 7.100-7.100h2.400" fill="none" stroke="#5c84d8" stroke-width=".8"/>
<path d="M70.300 198.200v-2.800l2-3h2.800l1.700 3v2.800z" fill="none" stroke="#9cacd0" stroke-width=".6"/>
<circle cx="82.800" cy="195.600" r="1.900" fill="#4c84dc"/><circle cx="85.800" cy="193.600" r="1.900" fill="#4c84dc"/><circle cx="85.600" cy="197" r="1.900" fill="#4c84dc"/><circle cx="82.400" cy="195" r=".7" fill="#d8e4f8"/><circle cx="85.400" cy="193" r=".7" fill="#d8e4f8"/><circle cx="85.200" cy="196.500" r=".7" fill="#d8e4f8"/>
<rect x="70.3" y="203.2" width="3" height="2.900" fill="url(#gb2)" stroke="#2c3a60" stroke-width=".3"/>
<rect x="70.3" y="206.7" width="3" height="2.900" fill="url(#gb2)" stroke="#2c3a60" stroke-width=".3"/>
<rect x="74.0" y="203.2" width="3" height="2.900" fill="url(#gb2)" stroke="#2c3a60" stroke-width=".3"/>
<rect x="74.0" y="206.7" width="3" height="2.900" fill="url(#gb2)" stroke="#2c3a60" stroke-width=".3"/>
<path d="M81.400 209.600l.8-6.400h3.400l2 6.400z" fill="url(#gb2)" stroke="#2c3450" stroke-width=".4"/>
<path d="M44.5 212.10000000000002 l1.600 0 l0 -1.600z" fill="#8a8a8a"/>
<path d="M65.9 211.8 l1.600 0 l0 -1.600z" fill="#8a8a8a"/>
<path d="M77.5 212.10000000000002 l1.600 0 l0 -1.600z" fill="#8a8a8a"/>
<rect x="3.400" y="214.800" width="7.200" height="6.800" fill="#7498d8" stroke="#c4d4f0" stroke-width=".5"/><rect x="4.200" y="217.600" width="3.600" height="3.400" fill="#f0f2f8"/>
<rect x="15.200" y="215.600" width="7" height="5.400" fill="url(#gw)" stroke="#2c3040" stroke-width=".3"/><path d="M15.200 216.200h7" stroke="#30343c" stroke-width=".9"/>
<path d="M25 218.300h3.200M30.400 218.300h3.200M28.200 216.800v3M30.400 216.800v3" stroke="#6c94dc" stroke-width=".6"/>
<rect x="37.200" y="214.800" width="6.400" height="6.400" fill="#d8dce8"/><rect x="37.200" y="214.800" width="3" height="2.600" fill="#6c90d4"/><rect x="40.400" y="217.800" width="3.200" height="3.400" fill="#30384c"/><rect x="41" y="218.400" width="2" height="2.200" fill="#e8ecf4"/>
<rect x="48.200" y="215.200" width="3.600" height="2.600" fill="#e4e8f0"/><rect x="49.600" y="218.200" width="3.600" height="2.600" fill="#c4ccdc"/><circle cx="54" cy="220.600" r="1.300" fill="#5c8cdc"/><path d="M52.400 216.400h2.200v2" stroke="#ccc" stroke-width=".5" fill="none"/>
<path d="M62.100 214.600v3.600" stroke="#bca070" stroke-width=".6"/><path d="M61.300 218l-.5 3.600h2.600l-.5-3.600z" fill="#ecc440"/>
<g transform="translate(73.600 218.200) rotate(-35)"><rect x="-3.800" y="-1.700" width="7.600" height="3.400" rx=".8" fill="url(#gw)" stroke="#444" stroke-width=".3"/></g>
<path d="M21.8 223.3 l1.600 0 l0 -1.600z" fill="#8a8a8a"/>
<path d="M48.5 245.3L50.75 240.2L53 245.3M49.355 243.362H52.145" fill="none" stroke="#e0e6f4" stroke-width="0.7" stroke-linejoin="miter"/>
<path d="M60 243.800l1.500 1.600l3-2.600" stroke="#4aa048" stroke-width=".9" fill="none"/>
<rect x="70.600" y="240" width="6.600" height="7.200" fill="#eef0f6" stroke="#30405c" stroke-width=".3"/><rect x="71.400" y="240.800" width="2.600" height="2.400" fill="#4c7cd0"/><path d="M74.600 241.400h2M74.600 242.600h2M71.400 244.400h5M71.400 245.800h5" stroke="#4c7cd0" stroke-width=".5"/>
<rect x="47.800" y="251.400" width="6.800" height="5.600" fill="#eceef4" stroke="#30343c" stroke-width=".3"/><path d="M48.600 252.800h4M48.600 254.200h3M48.600 255.600h4" stroke="#4a4e5a" stroke-width=".5"/><path d="M52.600 253l2.200 3.600" stroke="#30343c" stroke-width=".8"/>
<circle cx="61" cy="252.800" r="2.200" fill="#8cb4f0" stroke="#4c84dc" stroke-width=".8"/><path d="M62.600 254.400l2.800 2.400" stroke="#d4d8e0" stroke-width="1"/>
<path d="M69.800 254h6M69.800 256h6" stroke="#e8e8ec" stroke-width="1"/><path d="M73.600 252.300l1.200 1.100l2-2.400" stroke="#4aa048" stroke-width=".7" fill="none"/>
<path d="M6.200 278v14M19.400 278v14M6.200 279.400h13.200" stroke="#6f8fd4" stroke-width=".7" fill="none"/>
<circle cx="9.6" cy="290.6" r=".75" fill="#f0b830"/>
<circle cx="10.4" cy="288.6" r=".75" fill="#f0b830"/>
<circle cx="11.8" cy="287.3" r=".75" fill="#f0b830"/>
<circle cx="13.5" cy="287.1" r=".75" fill="#f0b830"/>
<circle cx="15" cy="288.2" r=".75" fill="#f0b830"/>
<circle cx="16" cy="290.2" r=".75" fill="#f0b830"/>
<path d="M28.600 288.500h13.400M28.600 286v5M42 286v5" stroke="#e8e8ec" stroke-width=".7"/><path d="M31.800 285.400l6.200-6.400l1.400 1.300l-6.200 6.400l-2 .6z" fill="#f08a28" stroke="#6a3a10" stroke-width=".3"/><path d="M38 279l.9-.9l1.400 1.300l-.9.900z" fill="#ffd860"/>
<path d="M47.600 283.200v-7M54.800 283.200v-7M47.600 278h7.200" stroke="#7c94c8" stroke-width=".6" fill="none"/>
<path d="M54.800000000000004 284.40000000000003 l1.600 0 l0 -1.600z" fill="#8a8a8a"/>
<circle cx="62.1" cy="279.2" r="3.3" fill="url(#gs)" stroke="#70788c" stroke-width=".4"/>
<path d="M65.8 284.40000000000003 l1.600 0 l0 -1.600z" fill="#8a8a8a"/>
<path d="M70 279.400h2.600M74.400 279.400h2.600M73.500 277v5" stroke="#7a7a80" stroke-width=".5"/>
<rect x="81" y="276" width="7" height="7.200" fill="#6c6c70" stroke="#a0a0a4" stroke-width=".4"/><rect x="83.600" y="277" width="1.800" height="5.200" fill="#f4d040"/><path d="M82.600 277h3.800M82.600 282.200h3.800" stroke="#f4d040" stroke-width=".6"/>
<path d="M47.600 294v-7.200M50 294v-5.600M52.400 294v-5.600M54.800 294v-7.200M47.600 288.400h7.200" stroke="#7c94c8" stroke-width=".6" fill="none"/>
<path d="M54.800000000000004 295.40000000000003 l1.600 0 l0 -1.600z" fill="#8a8a8a"/>
<rect x="58.400" y="288" width="7.600" height="5" fill="#e8eaf0" stroke="#30343c" stroke-width=".3"/>
<path d="M70 294v-6h7.200v6" stroke="#8a8e98" stroke-width=".6" fill="none"/><path d="M71.600 291.600l1.500 1.600l2.600-3" stroke="#4aa048" stroke-width=".9" fill="none"/>
<path d="M81.600 287.600l5.600 5.800" stroke="#c8ccd4" stroke-width=".6"/><circle cx="81.600" cy="287.600" r=".9" fill="#d8dce4"/><circle cx="87.200" cy="293.400" r=".9" fill="#d8dce4"/>
<path d="M13.400 318h-3l-3.600 8" stroke="#e8e8ec" stroke-width=".7" fill="none"/><path d="M6.300 327.200l.3-2l1.200.6z" fill="#e8e8ec"/>
<circle cx="16.8" cy="318" r="3.5" fill="url(#gs)" stroke="#70788c" stroke-width=".4"/>
<path d="M35 317.600h-2.400l-4 7.600" stroke="#e8e8ec" stroke-width=".7" fill="none"/><path d="M28 326.400l.3-2l1.200.6z" fill="#e8e8ec"/>
<circle cx="38.4" cy="316.9" r="3.7" fill="url(#gs)" stroke="#70788c" stroke-width=".4"/>
<path d="M35.600 326.400l5.200-5.400l1.400 1.300l-5.200 5.400l-2 .6z" fill="#f08a28" stroke="#6a3a10" stroke-width=".3"/><path d="M40.800 321l.9-.9l1.400 1.300l-.9.900z" fill="#ffd860"/>
<path d="M48.400 317.400l1-4.600h2.600" stroke="#6c94dc" stroke-width=".6" fill="none"/><circle cx="53.500" cy="313.300" r="1.700" fill="url(#gs)"/>
<path d="M60 318.600l.6-6" stroke="#8ca4d8" stroke-width=".5" stroke-dasharray="1 .6"/><circle cx="63" cy="312.400" r="1.700" fill="url(#gs)"/><circle cx="63" cy="316.800" r="1.700" fill="url(#gs)"/>
<path d="M69.800 313.800l3 .8" stroke="#ddd" stroke-width=".5"/><path d="M75 312.300l.9 2l2.100.2l-1.600 1.400l.5 2.100l-1.900-1.100l-1.900 1.100l.5-2.100l-1.600-1.400l2.100-.2z" fill="#f8d430" stroke="#c89010" stroke-width=".2"/>
<path d="M48.400 329l1-4.600h2.600" stroke="#d83434" stroke-width=".7" fill="none"/><path d="M48.200 322.800l3 .6l-1.600 1.800z" fill="#d83434"/><circle cx="53.500" cy="324.800" r="1.700" fill="url(#gs)"/>
<path d="M59.600 329l1-4.600h1.600" stroke="#8890a4" stroke-width=".5" fill="none"/><circle cx="64" cy="324" r="1.600" fill="url(#gs)"/><circle cx="64" cy="327.800" r="1.600" fill="url(#gs)"/>
<rect x="5.600" y="349.200" width="14.600" height="15" fill="url(#gw)" stroke="#2c3040" stroke-width=".5"/><rect x="5.600" y="349.200" width="14.600" height="1.300" fill="#3a4052"/><rect x="5.900" y="350.500" width="14" height="1.100" fill="#c4c8d8"/>
<path d="M9.300 351.600v12.600M12.900 351.600v12.600M16.500 351.600v12.600M5.600 354.700h14.600M5.600 357.900h14.600M5.600 361.100h14.600" stroke="#7c84a4" stroke-width=".5"/>
<rect x="28" y="351" width="8.400" height="12.400" rx=".8" fill="url(#gw)" stroke="#2c3040" stroke-width=".4"/><circle cx="30.600" cy="350.300" r="1.200" fill="none" stroke="#d0d0d4" stroke-width=".6"/><rect x="29.200" y="351.600" width="3" height="3.600" fill="#8a8e98"/>
<path d="M33.400 354h6.400l2.600 2.400v7.600h-9z" fill="url(#gw)" stroke="#2c3040" stroke-width=".4"/><path d="M33.400 357.600h9M33.400 360.600h9M37.800 357.600v6.400" stroke="#8a8e98" stroke-width=".4"/>
<rect x="48.6" y="348" width="6.4" height="6.8" fill="#e8ecf6" stroke="#2c3a5c" stroke-width=".3"/><rect x="49.2" y="348.6" width="3.2" height="1.600" fill="#4c7cd0"/><path d="M49.4 351.6h4.800000000000001M49.4 353h4.800000000000001" stroke="#4c7cd0" stroke-width=".5"/>
<rect x="58.6" y="349.2" width="6" height="6.2" fill="#e8ecf6" stroke="#2c3a5c" stroke-width=".3"/><rect x="59.2" y="349.8" width="3.0" height="1.600" fill="#4c7cd0"/><path d="M59.4 352.8h4.4M59.4 354.2h4.4" stroke="#4c7cd0" stroke-width=".5"/><path d="M62.600 348.600l.9.900l1.600-1.800" stroke="#4aa048" stroke-width=".6" fill="none"/>
<rect x="47.8" y="358.8" width="7.6" height="7" fill="#e8ecf6" stroke="#2c3a5c" stroke-width=".3"/><rect x="48.4" y="359.40000000000003" width="3.8" height="1.600" fill="#4c7cd0"/><path d="M48.599999999999994 362.40000000000003h6.0M48.599999999999994 363.8h6.0" stroke="#4c7cd0" stroke-width=".5"/><path d="M49 364.600v-3M50.600 364.600v-2M52.200 364.600v-1.200" stroke="#4c7cd0" stroke-width=".9"/>
<rect x="29.500" y="383.400" width="3.600" height="1.300" rx=".6" fill="#f0f0f4"/><rect x="37.500" y="384" width="5.600" height="1" fill="#9a9ea8"/>
<path d="M70 384.300h7M80 384.300h8" stroke="#6c84b8" stroke-width=".6"/><circle cx="70.500" cy="384.300" r=".6" fill="#9cb0e0"/><circle cx="76.500" cy="384.300" r=".6" fill="#9cb0e0"/><circle cx="87" cy="384.300" r=".6" fill="#9cb0e0"/>
<g transform="translate(623.3 43.2) scale(1.15)"><path d="M-3 -.2l2-1.800h4l-2 1.800z" fill="#eef0f8"/><path d="M-3 -.2h4v2h-4z" fill="#cfd4e2"/><path d="M1 -.2l2-1.800v2l-2 1.800z" fill="#9aa2b8"/></g>
<path d="M522.400 59.600l2.600-4.600l2.600 4.600z" fill="#dfe6f6"/><path d="M522.200 58.400h5.600v2h-5.600z" fill="#aebcdc"/>
<g transform="translate(538 57.3)"><path d="M-2.600 -1l1.400-1.600h3.800l-1.400 1.600z" fill="#f0e8e4"/><path d="M-2.600 -1h3.800v3.400h-3.800z" fill="#d8c8c0"/><path d="M1.200 -1l1.400-1.600v3.400l-1.400 1.600z" fill="#a08c84"/></g>
<path d="M537.600 59.600l1.200 1.200l2-2.200" stroke="#b86830" stroke-width=".8" fill="none"/>
<g transform="translate(549.6 57.8)"><path d="M-2.600 -1l1.400-1.600h3.800l-1.400 1.600z" fill="#e4e8f0"/><path d="M-2.600 -1h3.800v3.400h-3.800z" fill="#b4bcd0"/><path d="M1.200 -1l1.400-1.600v3.400l-1.400 1.600z" fill="#848ca4"/></g>
<circle cx="547" cy="54.800" r=".6" fill="#ddd"/>
<g transform="translate(561 57)"><path d="M-2.600 -1l1.400-1.600h3.800l-1.400 1.600z" fill="#dfe6f6"/><path d="M-2.600 -1h3.800v3.400h-3.800z" fill="#a4b8e0"/><path d="M1.200 -1l1.400-1.600v3.400l-1.400 1.600z" fill="#6c84bc"/></g>
<circle cx="562.600" cy="60.600" r=".6" fill="#eee"/>
<g transform="translate(572.8 57)"><path d="M-2.600 -1l1.400-1.600h3.800l-1.400 1.600z" fill="#dfe6f6"/><path d="M-2.600 -1h3.800v3.400h-3.800z" fill="#a4b8e0"/><path d="M1.200 -1l1.400-1.600v3.400l-1.400 1.600z" fill="#6c84bc"/></g>
<circle cx="575.400" cy="60.300" r=".6" fill="#eee"/>
<g transform="translate(585.6 55.8) scale(0.9)"><path d="M-3 -.2l2-1.800h4l-2 1.800z" fill="#eef0f8"/><path d="M-3 -.2h4v2h-4z" fill="#cfd4e2"/><path d="M1 -.2l2-1.800v2l-2 1.800z" fill="#9aa2b8"/></g>
<path d="M587.400 57.600v3M585.900 59.100h3" stroke="#b8c8e8" stroke-width=".9"/>
<g transform="translate(597.6 56) scale(0.9)"><path d="M-3 -.2l2-1.800h4l-2 1.800z" fill="#eef0f8"/><path d="M-3 -.2h4v2h-4z" fill="#cfd4e2"/><path d="M1 -.2l2-1.800v2l-2 1.800z" fill="#9aa2b8"/></g>
<circle cx="599.600" cy="59" r=".9" fill="none" stroke="#ddd" stroke-width=".5"/>
<g transform="translate(609.6 55.8) scale(0.9)"><path d="M-3 -.2l2-1.800h4l-2 1.800z" fill="#eef0f8"/><path d="M-3 -.2h4v2h-4z" fill="#cfd4e2"/><path d="M1 -.2l2-1.800v2l-2 1.800z" fill="#9aa2b8"/></g>
<rect x="608.400" y="57.600" width="3.400" height="2.600" fill="#9aa2b4" stroke="#d8dce8" stroke-width=".4"/>
<g transform="translate(622 55.8) scale(0.9)"><path d="M-3 -.2l2-1.800h4l-2 1.800z" fill="#eef0f8"/><path d="M-3 -.2h4v2h-4z" fill="#cfd4e2"/><path d="M1 -.2l2-1.800v2l-2 1.800z" fill="#9aa2b8"/></g>
<rect x="620.400" y="57.600" width="3.200" height="2.600" fill="#7c8494" stroke="#d8dce8" stroke-width=".4"/><circle cx="625" cy="55" r=".5" fill="#ddd"/>
<rect x="620.600" y="100.600" width="5" height="6.400" fill="#e8ecf4" stroke="#50586c" stroke-width=".3"/><path d="M621.400 102h3.400M621.400 103.400h3.400M621.400 104.800h2" stroke="#70788c" stroke-width=".4"/><path d="M623.600 106.400l3-3.400l1 .9l-3 3.400z" fill="#f4f4f8" stroke="#444" stroke-width=".3"/>
<rect x="450.600" y="387.300" width="8.600" height="7.200" rx=".8" fill="#8c8c8c"/><path d="M450.600 390.900h8.600M454.900 387.300v7.200M450.600 389h8.600M450.600 392.800h8.600" stroke="#555" stroke-width=".5"/>
<path d="M469 388v6h-5M466.600 388.600v3" stroke="#626262" stroke-width=".5" fill="none"/>
<path d="M473.600 387.600v6.400h5.600M476.400 394v-2.600h-2.800" stroke="#9a9a9a" stroke-width=".6" fill="none"/>
<circle cx="488.200" cy="391" r="2.500" fill="none" stroke="#e8e8e8" stroke-width=".7"/><path d="M488.200 391h2.600M488.200 391l1.600-2" stroke="#e8e8e8" stroke-width=".6"/>
<path d="M496.600 389.800h2.400l1.600 2" stroke="#f0f0f0" stroke-width=".8" fill="none"/><rect x="499.600" y="391.600" width="3.200" height="1.500" fill="#f0f0f0"/>
<path d="M507 389.600h2M510 389.600h4.200M507 392.600h7.200" stroke="#f0f0f0" stroke-width=".8"/><rect x="507" y="390.800" width="2.400" height="1.400" fill="#f0f0f0"/>
<rect x="517.200" y="387.600" width="7.400" height="7.400" fill="#5c8cdc" stroke="#a8c4f0" stroke-width=".6"/>
<rect x="528.600" y="388.300" width="3" height="3" fill="#f4f4f4"/><rect x="531" y="390.600" width="3" height="3" fill="#d0d0d0" stroke="#f4f4f4" stroke-width=".4"/><path d="M533.600 388.300l1.600 1.600" stroke="#eee" stroke-width=".6"/>
<path d="M539.600 394.300h7M539.600 394.300l5.400-6" stroke="#e8e0c0" stroke-width=".7" fill="none"/>
<rect x="550.600" y="387.800" width="6.400" height="6.400" fill="none" stroke="#f0f0f0" stroke-width=".5"/>
<circle cx="565" cy="388.600" r="1.200" fill="#f4f4f4"/><path d="M562.7 394.600l2.300-4.400l2.300 4.400M562.7 391.200h4.600" stroke="#f4f4f4" stroke-width=".9" fill="none"/>
<circle cx="576" cy="388.600" r="1.200" fill="#f4f4f4"/><path d="M573.7 394.600l2.300-4.400l2.300 4.400M573.7 391.200h4.600" stroke="#f4f4f4" stroke-width=".9" fill="none"/>
<path d="M578.600 387.600l1.400 1.400" stroke="#eee" stroke-width=".6"/>
<path d="M587.500 388v3.200l-3 3.200M587.500 391.200l3 3.200" stroke="#f4f4f4" stroke-width=".9" fill="none"/>
<path d="M602.700 390.300h2.800l-1.400 1.800z" fill="#ddd"/>
<path d="M611 388.600a1.600 1.600 0 1 1 2.600 1.600v3M613.600 392.600h1.600" stroke="#9c9c9c" stroke-width=".8" fill="none"/><circle cx="614.800" cy="389.600" r="1.200" fill="none" stroke="#9c9c9c" stroke-width=".5"/>
<circle cx="624.700" cy="391" r="2.100" fill="none" stroke="#c4c4c4" stroke-width="1.200"/><circle cx="624.700" cy="391" r="2.900" fill="none" stroke="#c4c4c4" stroke-width=".7" stroke-dasharray="1 1.270"/>
<rect x="449.400" y="2.300" width="10" height="6.300" rx="3.100" fill="#2c1e20"/><circle cx="452.600" cy="5.500" r="1.700" fill="none" stroke="#fbe0df" stroke-width=".7"/><circle cx="456" cy="5.500" r="1.900" fill="none" stroke="#fbe0df" stroke-width=".7"/>
<ellipse cx="469.400" cy="5.300" rx="4.700" ry="3.300" fill="#1c5cb4" transform="rotate(-12 469.400 5.300)"/><path d="M466.300 5.600c2-2 4.600-2.600 6.400-1.600" stroke="#e8f0fc" stroke-width=".9" fill="none"/>
<path d="M483.500 2.300l3.900 6.300h-7.800z" fill="#2c1e20"/><path d="M483.500 5l1.500 2.400h-3z" fill="#fbe0df"/>
<path d="M493.200 3.900a6.200 6.200 0 0 1 8.800 0M494.700 5.500a4.100 4.100 0 0 1 5.800 0M496.200 7a2 2 0 0 1 2.800 0" stroke="#2c1e20" stroke-width=".8" fill="none"/><circle cx="497.600" cy="8" r=".6" fill="#2c1e20"/>
<path d="M510 7.200h-1.900v-5h9.400v5h-1.900" stroke="#2c1e20" stroke-width=".7" fill="none"/><path d="M512.800 5.600l2.800 3h-5.600z" fill="#2c1e20"/>
<rect x="525.200" y="2.900" width="10.200" height="4.800" rx="1" fill="none" stroke="#2c1e20" stroke-width=".6"/><rect x="526" y="3.700" width="2.200" height="3.200" fill="#2c1e20"/><path d="M536.200 4.400v1.800" stroke="#2c1e20" stroke-width=".9"/>
<circle cx="589.400" cy="4.700" r="2" fill="none" stroke="#2c1e20" stroke-width=".8"/><path d="M590.900 6.200l1.800 1.800" stroke="#2c1e20" stroke-width=".9"/>
<circle cx="607.800" cy="5.300" r="3.600" fill="#1c1838"/><circle cx="607.800" cy="5.300" r="2.700" fill="url(#siri)"/>
<path d="M622.600 3.400h6.400M622.600 5.400h6.400M622.600 7.400h6.400" stroke="#2c1e20" stroke-width=".9"/><path d="M621 3.400h.8M621 5.400h.8M621 7.400h.8" stroke="#2c1e20" stroke-width=".9"/>
</svg>
<svg id="txt" width="640" height="400" viewBox="0 0 640 400" style="will-change:transform" font-family="Liberation Sans, sans-serif">
<text x="27.00" y="8" font-size="7.1" fill="#3b2c2e" textLength="49.50" font-weight="700" stroke="#3b2c2e" stroke-width=".16">AutoCAD 2017</text>
<text x="86.00" y="8" font-size="7.1" fill="#3b2c2e" textLength="11.00" stroke="#3b2c2e" stroke-width=".16">File</text>
<text x="106.70" y="8" font-size="7.1" fill="#3b2c2e" textLength="12.10" stroke="#3b2c2e" stroke-width=".16">Edit</text>
<text x="128.00" y="8" font-size="7.1" fill="#3b2c2e" textLength="15.80" stroke="#3b2c2e" stroke-width=".16">View</text>
<text x="153.00" y="8" font-size="7.1" fill="#3b2c2e" textLength="18.80" stroke="#3b2c2e" stroke-width=".16">Insert</text>
<text x="181.00" y="8" font-size="7.1" fill="#3b2c2e" textLength="22.80" stroke="#3b2c2e" stroke-width=".16">Format</text>
<text x="213.70" y="8" font-size="7.1" fill="#3b2c2e" textLength="16.30" stroke="#3b2c2e" stroke-width=".16">Tools</text>
<text x="240.00" y="8" font-size="7.1" fill="#3b2c2e" textLength="15.80" stroke="#3b2c2e" stroke-width=".16">Draw</text>
<text x="265.80" y="8" font-size="7.1" fill="#3b2c2e" textLength="33.40" stroke="#3b2c2e" stroke-width=".16">Dimension</text>
<text x="308.80" y="8" font-size="7.1" fill="#3b2c2e" textLength="22.00" stroke="#3b2c2e" stroke-width=".16">Modify</text>
<text x="340.50" y="8" font-size="7.1" fill="#3b2c2e" textLength="25.30" stroke="#3b2c2e" stroke-width=".16">Window</text>
<text x="375.00" y="8" font-size="7.1" fill="#3b2c2e" textLength="16.00" stroke="#3b2c2e" stroke-width=".16">Help</text>
<text x="544.00" y="8" font-size="7.1" fill="#3b2c2e" textLength="32.00" stroke="#3b2c2e" stroke-width=".16">Sáb 15:33</text>
<text x="295.30" y="20" font-size="6.3" fill="#e6e6e6" textLength="41.80">Drawing1.dwg</text>
<text x="565.50" y="19" font-size="5.82" fill="#dcdcdc" textLength="37.80">Vzadel Vzadel</text>
<text x="622.70" y="19" font-size="5.76" fill="#fff" textLength="6.50">27</text>
<text x="9.80" y="45" font-size="5.8" fill="#ffffff" textLength="20.90" stroke="#fff" stroke-width=".25">Drafting</text>
<text x="48.80" y="45" font-size="5.8" fill="#6c6c6c" textLength="24.60">Modeling</text>
<text x="86.00" y="45" font-size="6" fill="#9a9a9a" text-anchor="middle">«</text>
<text x="117.60" y="46" font-size="5.9" fill="#f2f2f2" textLength="25.70">Drawing1*</text>
<text x="8.70" y="55" font-size="4.9" fill="#f2f2f2" stroke="#f2f2f2" stroke-width=".15">Draw</text>
<text x="8.70" y="103" font-size="4.9" fill="#f2f2f2" stroke="#f2f2f2" stroke-width=".15">Hatch</text>
<text x="8.70" y="139" font-size="4.9" fill="#f2f2f2" stroke="#f2f2f2" stroke-width=".15">Block</text>
<text x="8.70" y="187" font-size="4.9" fill="#f2f2f2" stroke="#f2f2f2" stroke-width=".15">Modify</text>
<text x="8.70" y="235" font-size="4.9" fill="#f2f2f2" stroke="#f2f2f2" stroke-width=".15">Text</text>
<text x="8.70" y="271" font-size="4.9" fill="#f2f2f2" stroke="#f2f2f2" stroke-width=".15">Dimension</text>
<text x="8.70" y="307" font-size="4.9" fill="#f2f2f2" stroke="#f2f2f2" stroke-width=".15">Leader</text>
<text x="8.70" y="343" font-size="4.9" fill="#f2f2f2" stroke="#f2f2f2" stroke-width=".15">Table</text>
<text x="8.70" y="379" font-size="4.9" fill="#f2f2f2" stroke="#f2f2f2" stroke-width=".15">Parametric</text>
<text x="101.00" y="58" font-size="6" fill="#6f7780" text-anchor="middle">–</text>
<text x="112.00" y="58" font-size="6.16" fill="#78808a" textLength="11.00" font-weight="700">Top</text>
<text x="130.00" y="58" font-size="5.89" fill="#78808a" textLength="38.50" font-weight="700">2D Wireframe</text>
<text x="469.80" y="91" font-size="5.6" fill="#444850" textLength="10.00" font-weight="700">TOP</text>
<text x="474.60" y="66" font-size="10.3" fill="#d6d6d6" text-anchor="middle" font-weight="700">N</text>
<text x="474.60" y="118" font-size="10.3" fill="#d6d6d6" text-anchor="middle" font-weight="700">S</text>
<text x="448.30" y="92" font-size="10.3" fill="#d6d6d6" text-anchor="middle" font-weight="700">W</text>
<text x="501.00" y="92" font-size="10.3" fill="#d6d6d6" text-anchor="middle" font-weight="700">E</text>
<text x="464.20" y="136" font-size="5.2" fill="#22262e" textLength="11.80">WCS</text>
<text x="379.00" y="245" font-size="6" fill="#333" textLength="8.00">pol</text>
<text x="378.75" y="259" font-size="5.5" fill="#ffffff" textLength="40.90" stroke="#fff" stroke-width=".12">POL (POLYGON)</text>
<text x="378.75" y="269" font-size="5.5" fill="#ffffff" textLength="40.90" stroke="#fff" stroke-width=".12">POLARADDANG</text>
<text x="378.75" y="279" font-size="5.5" fill="#ffffff" textLength="29.00" stroke="#fff" stroke-width=".12">POLARANG</text>
<text x="378.75" y="289" font-size="5.5" fill="#ffffff" textLength="28.75" stroke="#fff" stroke-width=".12">POLARDIST</text>
<text x="378.75" y="299" font-size="5.5" fill="#ffffff" textLength="33.10" stroke="#fff" stroke-width=".12">POLARMODE</text>
<text x="378.75" y="309" font-size="5.5" fill="#ffffff" textLength="45.00" stroke="#fff" stroke-width=".12">POLYLINE (PLINE)</text>
<text x="378.75" y="319" font-size="5.5" fill="#ffffff" textLength="28.00" stroke="#fff" stroke-width=".12">POLYSIDES</text>
<text x="378.75" y="329" font-size="5.5" fill="#ffffff" textLength="29.00" stroke="#fff" stroke-width=".12">POLYSOLID</text>
<text x="125.50" y="381" font-size="5.9" fill="#8a8a8a" textLength="44.00" font-style="italic">Type a command</text>
<text x="99.00" y="393" font-size="5.8" fill="#f8f8f8" textLength="15.00" stroke="#f8f8f8" stroke-width=".12">Model</text>
<text x="137.90" y="393" font-size="5.8" fill="#a0a0a0" textLength="19.70">Layout1</text>
<text x="167.90" y="393" font-size="5.8" fill="#a0a0a0" textLength="19.20">Layout2</text>
<text x="377.70" y="393" font-size="6.05" fill="#c8c8c8" textLength="70.00">14.6538, 16.8900, 0.0000</text>
<text x="519.60" y="46" font-size="5.94" fill="#f0f0f0" textLength="18.10">Layers</text>
<text x="519.60" y="106" font-size="5.85" fill="#f4f4f4" textLength="29.40" font-weight="700">Properties</text>
<text x="523.60" y="90" font-size="5.59" fill="#f0f0f0" textLength="53.00">Unsaved Layer State</text>
<text x="561.30" y="76" font-size="5.7" fill="#f0f0f0">0</text>
<text x="593.20" y="106" font-size="4.6" fill="#666" text-anchor="middle">All</text>
<text x="608.20" y="106" font-size="4.6" fill="#eee" text-anchor="middle">My</text>
<text x="523.80" y="121" font-size="5.7" fill="#7a7a7a">Model Space</text>
<text x="571.00" y="134" font-size="5.7" fill="#e6e6e6" text-anchor="end" letter-spacing=".14">Color</text>
<text x="589.50" y="134" font-size="5.7" fill="#f0f0f0">ByLayer</text>
<text x="571.00" y="146" font-size="5.7" fill="#e6e6e6" text-anchor="end" letter-spacing=".14">Layer</text>
<text x="579.00" y="146" font-size="5.7" fill="#f0f0f0">0</text>
<text x="571.00" y="157" font-size="5.7" fill="#e6e6e6" text-anchor="end" letter-spacing=".14">Linetype</text>
<text x="602.70" y="157" font-size="5.7" fill="#f0f0f0">ByL...</text>
<text x="571.00" y="169" font-size="5.7" fill="#e6e6e6" text-anchor="end" letter-spacing=".14">Linetype scale</text>
<text x="578.00" y="169" font-size="5.7" fill="#f0f0f0" textLength="18.60">1.0000</text>
<text x="571.00" y="180" font-size="5.7" fill="#e6e6e6" text-anchor="end" letter-spacing=".14">Lineweight</text>
<text x="579.00" y="180" font-size="5.7" fill="#f0f0f0">ByLayer</text>
<text x="571.00" y="192" font-size="5.7" fill="#e6e6e6" text-anchor="end" letter-spacing=".14">Transparency</text>
<text x="603.00" y="192" font-size="5.7" fill="#f0f0f0" text-anchor="end">0</text>
<text x="571.00" y="203" font-size="5.7" fill="#e6e6e6" text-anchor="end" letter-spacing=".14">Text style</text>
<text x="579.00" y="203" font-size="5.7" fill="#f0f0f0">Standard</text>
<text x="571.00" y="215" font-size="5.7" fill="#e6e6e6" text-anchor="end" letter-spacing=".14">Dimension st...</text>
<text x="579.00" y="215" font-size="5.7" fill="#f0f0f0">Standard</text>
<text x="571.00" y="226" font-size="5.7" fill="#e6e6e6" text-anchor="end" letter-spacing=".14">Multileader st...</text>
<text x="579.00" y="226" font-size="5.7" fill="#f0f0f0">Standard</text>
<text x="571.00" y="238" font-size="5.7" fill="#e6e6e6" text-anchor="end" letter-spacing=".14">Table style</text>
<text x="579.00" y="238" font-size="5.7" fill="#f0f0f0">Standard</text>
<text x="571.00" y="249" font-size="5.7" fill="#e6e6e6" text-anchor="end" letter-spacing=".14">Annotation s...</text>
<text x="579.00" y="249" font-size="5.7" fill="#f0f0f0">1:1</text>
<text x="571.00" y="261" font-size="5.7" fill="#e6e6e6" text-anchor="end" letter-spacing=".14">Text height</text>
<text x="578.00" y="261" font-size="5.7" fill="#f0f0f0" textLength="18.60">0.2000</text>
<text x="571.00" y="272" font-size="5.7" fill="#e6e6e6" text-anchor="end" letter-spacing=".14">Plot style</text>
<text x="579.00" y="272" font-size="5.7" fill="#f0f0f0">ByColor</text>
<text x="571.00" y="284" font-size="5.7" fill="#e6e6e6" text-anchor="end" letter-spacing=".14">Plot style table</text>
<text x="579.00" y="284" font-size="5.7" fill="#f0f0f0">None</text>
<text x="571.00" y="295" font-size="5.7" fill="#e6e6e6" text-anchor="end" letter-spacing=".14">Plot style atta...</text>
<text x="579.00" y="295" font-size="5.7" fill="#7c7c7c">Model</text>
<text x="571.00" y="307" font-size="5.7" fill="#e6e6e6" text-anchor="end" letter-spacing=".14">Plot table type</text>
<text x="579.00" y="307" font-size="5.7" fill="#7c7c7c">Not available</text>
<text x="7.70" y="255" font-size="15.8" fill="#f6f6f6">A</text>
<text x="28.50" y="256" font-size="19.4" fill="#f6f6f6">A</text>
<text x="59.50" y="243" font-size="2.6" fill="#b0b0b0" font-weight="700">ABC</text>
<text x="59.40" y="292" font-size="3.8" fill="#222" font-weight="700">00</text>
<text x="593.00" y="393" font-size="5.6" fill="#c4c4c4" textLength="7.20">1:1</text>
<svg width="640" height="400" viewBox="0 0 640 400"><path d="M35.600 254.600l5.400-5.600l1.100 1l-5.400 5.600l-1.600.5z" fill="#f08a28" stroke="#5a3410" stroke-width=".3"/><path d="M41 249l.8-.8l1.100 1l-.8.800z" fill="#f8d8a0"/></svg>
</svg>
</body></html>
